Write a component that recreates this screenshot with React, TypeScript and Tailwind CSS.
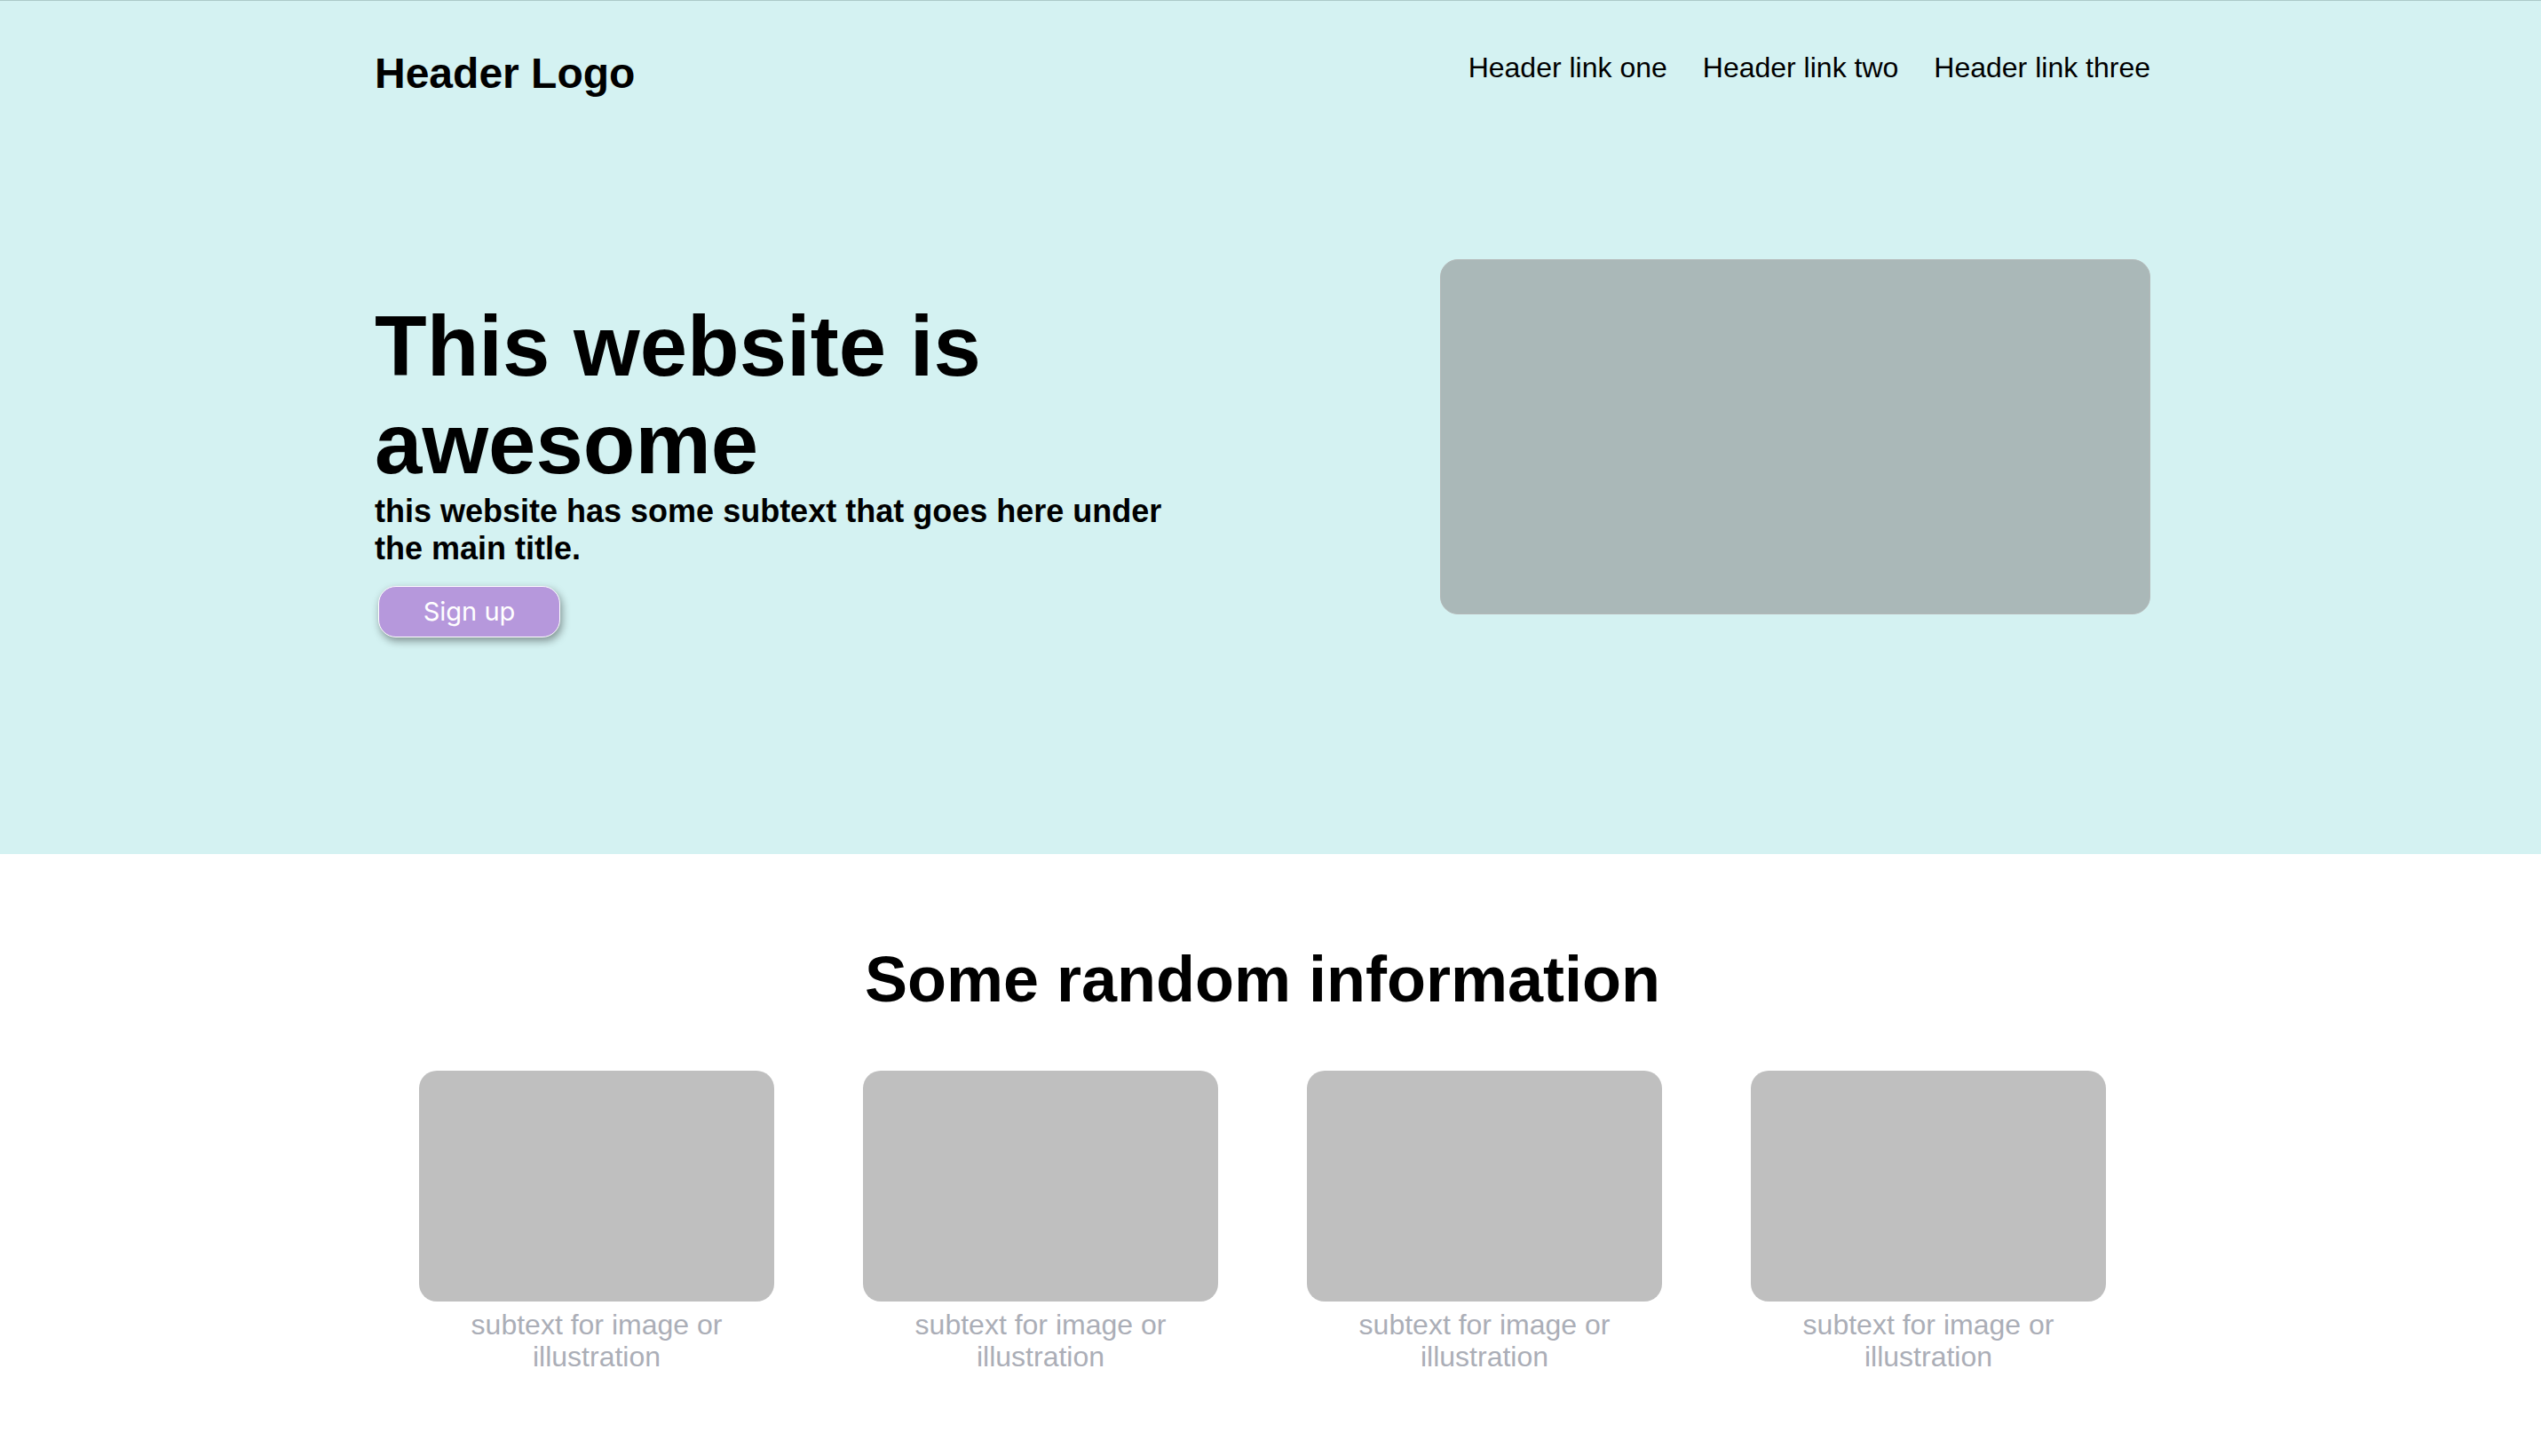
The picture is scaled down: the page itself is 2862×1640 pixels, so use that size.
const links = ["Header link one", "Header link two", "Header link three"];
const cards = [1, 2, 3, 4];

function Hero() {
  return (
    <div className="border-t border-[#accac9] bg-[#d4f2f2] pr-[18px] pb-[244px]">
      <div className="mx-auto w-full max-w-[2000px]">
        <header className="flex items-start justify-between pt-[54px]">
          <p className="text-5xl leading-[55px] font-bold">Header Logo</p>
          <nav className="pt-[3px]">
            <ul className="flex gap-10">
              {links.map((label) => (
                <li key={label}>
                  <a href="#" className="block text-[32px] leading-[37px]">
                    {label}
                  </a>
                </li>
              ))}
            </ul>
          </nav>
        </header>
        <section className="flex items-start justify-between gap-10 pt-[182px]">
          <div className="w-[45%] pt-[43px]">
            <h1 className="text-8xl leading-[110px] font-bold">This website is awesome</h1>
            <p className="text-4xl leading-[42px] font-bold">
              this website has some subtext that goes here under the main title.
            </p>
            <button
              type="button"
              className="mt-[21px] ml-1 block h-[58px] w-[205px] rounded-[20px] border border-white bg-[#b698dc] font-['Inter',sans-serif] text-[29px] leading-9 text-white shadow-[2px_4px_10px_rgba(0,0,0,0.4)]"
            >
              Sign up
            </button>
          </div>
          <div className="h-[400px] w-2/5 rounded-[20px] border border-[#b3b8b8] bg-[#aab8b8]" />
        </section>
      </div>
    </div>
  );
}

function Information() {
  return (
    <section className="pt-[100px] pr-[18px] pb-20">
      <h2 className="text-center text-7xl leading-[83px] font-bold">Some random information</h2>
      <ul className="mx-auto mt-[61px] grid w-full max-w-[2000px] grid-cols-4">
        {cards.map((card) => (
          <li key={card} className="px-[50px]">
            <div className="h-[260px] rounded-[20px] bg-[#bfbfbf]" />
            <p className="px-10 pt-2 text-center text-[32px] leading-9 text-[#abaeb7]">
              subtext for image or illustration
            </p>
          </li>
        ))}
      </ul>
    </section>
  );
}

export default function App() {
  return (
    <main className="min-h-screen bg-white font-['Liberation_Sans',Arial,sans-serif] text-black">
      <Hero />
      <Information />
    </main>
  );
}
